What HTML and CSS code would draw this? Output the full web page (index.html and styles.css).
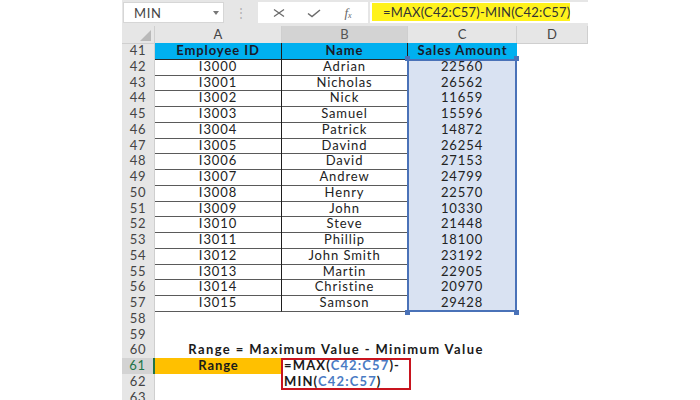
FILE: index.html
```html
<!DOCTYPE html>
<html>
<head>
<meta charset="utf-8">
<link rel="stylesheet" href="styles.css">
</head>
<body>
<div class="sheet">
  <div class="fbar">
    <div class="namebox"><span>MIN</span><span class="dd"></span></div>
    <div class="dots">&#8942;</div>
    <div class="fxbox">
      <svg class="ic" width="12" height="10" viewBox="0 0 12 10"><path d="M1 1.5 L11 8.5 M11 1.5 L1 8.5" stroke="#6b6b6b" stroke-width="1.3" fill="none"/></svg>
      <svg class="ic" width="14" height="10" viewBox="0 0 14 10"><path d="M1 5.5 L5 8.5 L13 2" stroke="#6b6b6b" stroke-width="1.5" fill="none"/></svg>
      <span class="fx">f<sub>x</sub></span>
    </div>
    <div class="fin"><div class="hl">=MAX(C42:C57)-MIN(C42:C57)</div></div>
  </div>
  <div class="hdr">
    <div class="corner"></div>
    <div class="ch">A</div>
    <div class="ch on">B</div>
    <div class="ch">C</div>
    <div class="ch">D</div>
  </div>
  <div class="row t head"><div class="rn">41</div><div class="c th">Employee ID</div><div class="c th">Name</div><div class="c th">Sales Amount</div><div class="c"></div></div>
  <div class="row t"><div class="rn">42</div><div class="c">I3000</div><div class="c">Adrian</div><div class="c sel first">22560</div><div class="c"></div></div>
  <div class="row t"><div class="rn">43</div><div class="c">I3001</div><div class="c">Nicholas</div><div class="c sel">26562</div><div class="c"></div></div>
  <div class="row t"><div class="rn">44</div><div class="c">I3002</div><div class="c">Nick</div><div class="c sel">11659</div><div class="c"></div></div>
  <div class="row t"><div class="rn">45</div><div class="c">I3003</div><div class="c">Samuel</div><div class="c sel">15596</div><div class="c"></div></div>
  <div class="row t"><div class="rn">46</div><div class="c">I3004</div><div class="c">Patrick</div><div class="c sel">14872</div><div class="c"></div></div>
  <div class="row t"><div class="rn">47</div><div class="c">I3005</div><div class="c">Davind</div><div class="c sel">26254</div><div class="c"></div></div>
  <div class="row t"><div class="rn">48</div><div class="c">I3006</div><div class="c">David</div><div class="c sel">27153</div><div class="c"></div></div>
  <div class="row t"><div class="rn">49</div><div class="c">I3007</div><div class="c">Andrew</div><div class="c sel">24799</div><div class="c"></div></div>
  <div class="row t"><div class="rn">50</div><div class="c">I3008</div><div class="c">Henry</div><div class="c sel">22570</div><div class="c"></div></div>
  <div class="row t"><div class="rn">51</div><div class="c">I3009</div><div class="c">John</div><div class="c sel">10330</div><div class="c"></div></div>
  <div class="row t"><div class="rn">52</div><div class="c">I3010</div><div class="c">Steve</div><div class="c sel">21448</div><div class="c"></div></div>
  <div class="row t"><div class="rn">53</div><div class="c">I3011</div><div class="c">Phillip</div><div class="c sel">18100</div><div class="c"></div></div>
  <div class="row t"><div class="rn">54</div><div class="c">I3012</div><div class="c">John Smith</div><div class="c sel">23192</div><div class="c"></div></div>
  <div class="row t"><div class="rn">55</div><div class="c">I3013</div><div class="c">Martin</div><div class="c sel">22905</div><div class="c"></div></div>
  <div class="row t"><div class="rn">56</div><div class="c">I3014</div><div class="c">Christine</div><div class="c sel">20970</div><div class="c"></div></div>
  <div class="row t"><div class="rn">57</div><div class="c">I3015</div><div class="c">Samson</div><div class="c sel last">29428</div><div class="c"></div></div>
  <div class="row"><div class="rn">58</div><div class="c"></div><div class="c"></div><div class="c"></div><div class="c"></div></div>
  <div class="row"><div class="rn">59</div><div class="c"></div><div class="c"></div><div class="c"></div><div class="c"></div></div>
  <div class="row"><div class="rn">60</div><div class="title">Range = Maximum Value - Minimum Value</div><div class="c"></div></div>
  <div class="row"><div class="rn on">61</div><div class="c gold">Range</div><div class="c f f1">=MAX(<span class="ref">C42:C57</span>)-</div><div class="c"></div><div class="c"></div></div>
  <div class="row"><div class="rn">62</div><div class="c"></div><div class="c f f2">MIN(<span class="ref">C42:C57</span>)</div><div class="c"></div><div class="c"></div></div>
  <div class="row"><div class="rn">63</div><div class="c"></div><div class="c"></div><div class="c"></div><div class="c"></div></div>
</div>
</body>
</html>
```
FILE: styles.css
```css
* { box-sizing: border-box; }
body {
  margin: 0;
  background: #fff;
  font-family: Lato, "Open Sans", "Liberation Sans", sans-serif;
  color: #222;
}
.sheet {
  margin-left: 122px;
  width: 466px;
  height: 400px;
  overflow: hidden;
}
.fbar {
  height: 26px;
  background: #e6e6e6;
  display: flex;
  align-items: flex-start;
  padding-top: 2px;
}
.namebox {
  width: 101px;
  height: 21px;
  margin-left: 1px;
  background: #fff;
  border: 1px solid #d6d6d6;
  display: flex;
  align-items: center;
  justify-content: space-between;
  padding: 0 4px 0 10px;
  font-size: 13px;
  letter-spacing: 0.6px;
  color: #444;
}
.dd {
  width: 0;
  height: 0;
  border-left: 3.5px solid transparent;
  border-right: 3.5px solid transparent;
  border-top: 4px solid #777;
}
.dots {
  width: 35px;
  height: 21px;
  line-height: 21px;
  text-align: center;
  color: #b0b0b0;
  font-size: 12px;
}
.fxbox {
  width: 110px;
  height: 21px;
  background: #fff;
  display: flex;
  align-items: center;
  padding-left: 15px;
  gap: 22px;
}
.fx {
  font-family: "Liberation Serif", serif;
  font-style: italic;
  font-size: 13px;
  color: #666;
  margin-left: 1px;
}
.fx sub { font-size: 8px; vertical-align: -1px; }
.fin {
  width: 218px;
  height: 21px;
  margin-left: 2px;
  background: #fff;
  padding: 1px 18px 2px 2px;
}
.hl {
  background: #fff21c;
  height: 100%;
  font-size: 13px;
  line-height: 18px;
  color: #333;
  padding-left: 11px;
  letter-spacing: 0.2px;
  white-space: nowrap;
}
.hdr, .row {
  display: grid;
  grid-template-columns: 33px 127px 126px 109px 71px;
}
.hdr { height: 17px; }
.corner {
  background: #e6e6e6;
  border-right: 1px solid #cfcfcf;
  border-bottom: 1px solid #cfcfcf;
  position: relative;
}
.corner::after {
  content: "";
  position: absolute;
  right: 3px;
  bottom: 2px;
  width: 0;
  height: 0;
  border-left: 11px solid transparent;
  border-bottom: 11px solid #b9b9b9;
}
.ch {
  background: #e6e6e6;
  border-right: 1px solid #cfcfcf;
  border-bottom: 1px solid #cfcfcf;
  text-align: center;
  font-size: 13px;
  line-height: 17px;
  color: #444;
}
.ch.on { background: #d3d3d3; color: #555; }
.row { height: 15.75px; }
.rn {
  background: #e6e6e6;
  border-right: 1px solid #cfcfcf;
  text-align: center;
  font-size: 13px;
  line-height: 15.75px;
  letter-spacing: 0.6px;
  color: #444;
}
.rn.on {
  background: #d3d3d3;
  color: #217346;
  border-right: 2px solid #217346;
}
.c {
  text-align: center;
  font-size: 13px;
  line-height: 15.75px;
  white-space: nowrap;
  letter-spacing: 0.9px;
}
.t .c:nth-child(2), .t .c:nth-child(3) { border-right: 1px solid #1e1e1e; }
.t .c:nth-child(2), .t .c:nth-child(3), .t .c:nth-child(4) { border-bottom: 1px solid #5a5a5a; }
.th {
  background: #00b0f0;
  font-weight: 700;
  color: #1a1a2a;
  letter-spacing: 0.9px;
}
.head .c:nth-child(2), .head .c:nth-child(3), .head .c:nth-child(4) { border-bottom: 1px solid #2a2a2a; }
.t .c.sel {
  background: #d9e2f2;
  border-left: 2px solid #4a72b8;
  border-right: 2px solid #4a72b8;
  margin-left: -1px;
  position: relative;
}
.t .c.sel.first { box-shadow: inset 0 2px 0 #4a72b8; }
.t .c.sel.last { border-bottom: 0; box-shadow: inset 0 -2px 0 #4a72b8; }
.sel.first::before, .sel.first::after, .sel.last::before, .sel.last::after {
  content: "";
  position: absolute;
  width: 5px;
  height: 5px;
  background: #4a72b8;
}
.sel.first::before { left: -4px; top: -3px; }
.sel.first::after { right: -4px; top: -3px; }
.sel.last::before { left: -4px; bottom: -3px; }
.sel.last::after { right: -4px; bottom: -3px; }
.title {
  grid-column: 2 / 5;
  text-align: center;
  font-size: 13px;
  font-weight: 700;
  line-height: 15.75px;
  letter-spacing: 1.4px;
  color: #1a1a1a;
  white-space: nowrap;
}
.gold {
  background: #ffc000;
  font-weight: 700;
  color: #1a1a1a;
}
.f {
  text-align: left;
  font-weight: 700;
  color: #1a1a1a;
  padding-left: 1px;
  margin: 0 -3px 0 -1px;
  border-left: 2px solid #c8141e;
  border-right: 2px solid #c8141e;
  letter-spacing: 1.15px;
  overflow: visible;
}
.f1 { box-shadow: inset 0 2px 0 #c8141e; }
.f2 { box-shadow: inset 0 -2px 0 #c8141e; }
.ref { color: #4a7bc4; }
```
